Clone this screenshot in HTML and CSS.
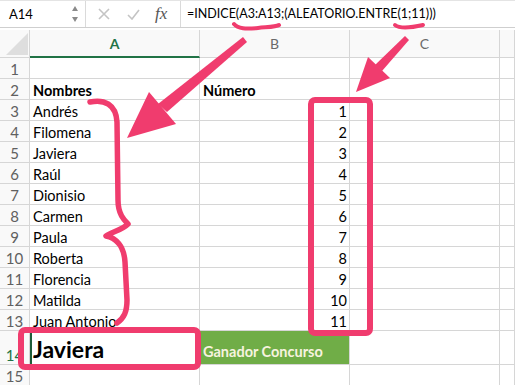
FILE: index.html
```html
<!DOCTYPE html>
<html lang="es">

<head>
    <meta charset="utf-8">
    <title>Ganador Concurso - Hoja</title>
    <link rel="stylesheet" href="styles.css">
</head>

<body>
    <div class="app">
        <div class="formula-bar">
            <div class="name-box">
                <span>A14</span>
                <span class="stepper"><i class="up"></i><i class="down"></i></span>
            </div>
            <div class="tools">
                <svg class="tool" width="12" height="12" viewBox="0 0 12 12"><path d="M1 1 L11 11 M11 1 L1 11" /></svg>
                <svg class="tool" width="13" height="11" viewBox="0 0 13 11"><path d="M1 6 L5 10 L12 1" /></svg>
                <span class="fx">fx</span>
            </div>
            <div class="formula">=INDICE(A3:A13;(ALEATORIO.ENTRE(1;11)))</div>
        </div>

        <div class="sheet">
            <div class="row head">
                <div class="corner"><i></i></div>
                <div class="col-h active">A</div>
                <div class="col-h">B</div>
                <div class="col-h">C</div>
                <div class="col-h"></div>
            </div>
            <div class="row"><div class="rh">1</div><div></div><div></div><div></div><div></div></div>
            <div class="row"><div class="rh">2</div><div class="bold">Nombres</div><div class="bold">Número</div><div></div><div></div></div>
            <div class="row"><div class="rh">3</div><div>Andrés</div><div class="num">1</div><div></div><div></div></div>
            <div class="row"><div class="rh">4</div><div>Filomena</div><div class="num">2</div><div></div><div></div></div>
            <div class="row"><div class="rh">5</div><div>Javiera</div><div class="num">3</div><div></div><div></div></div>
            <div class="row"><div class="rh">6</div><div>Raúl</div><div class="num">4</div><div></div><div></div></div>
            <div class="row"><div class="rh">7</div><div>Dionisio</div><div class="num">5</div><div></div><div></div></div>
            <div class="row"><div class="rh">8</div><div>Carmen</div><div class="num">6</div><div></div><div></div></div>
            <div class="row"><div class="rh">9</div><div>Paula</div><div class="num">7</div><div></div><div></div></div>
            <div class="row"><div class="rh">10</div><div>Roberta</div><div class="num">8</div><div></div><div></div></div>
            <div class="row"><div class="rh">11</div><div>Florencia</div><div class="num">9</div><div></div><div></div></div>
            <div class="row"><div class="rh">12</div><div>Matilda</div><div class="num">10</div><div></div><div></div></div>
            <div class="row"><div class="rh">13</div><div>Juan Antonio</div><div class="num">11</div><div></div><div></div></div>
            <div class="row tall"><div class="rh active">14</div><div class="winner">Javiera</div><div class="label">Ganador Concurso</div><div></div><div></div></div>
            <div class="row"><div class="rh">15</div><div></div><div></div><div></div><div></div></div>
        </div>

        <!-- pink annotations drawn over the sheet -->
        <svg class="marks" width="515" height="385" viewBox="0 0 515 385">
            <g fill="none" stroke="#f03c6e" stroke-linecap="round" stroke-linejoin="round">
                <path stroke-width="4" d="M234 24 C238 29 246 29 258 28 C268 27 276 27 279 25" />
                <path stroke-width="4" d="M395 25 C400 29 410 28 423 25" />
                <path stroke-width="5.5" d="M90 102 C104 99 116 104 117 122 L118 200 C118 214 124 220 128 224 C122 230 112 232 106 236 C116 238 124 246 125 262 L127 300 C127 312 124 318 117 323" />
                <rect x="311" y="100" width="59" height="233" rx="4" stroke-width="6" />
                <rect x="21" y="330" width="177" height="37" rx="4" stroke-width="6" />
            </g>
            <g fill="#f03c6e">
                <polygon points="243,37 247,42 167,112 158,104" />
                <polygon points="127,138 149,92 176,124" />
                <polygon points="405,36 409,40 382,71 375,65" />
                <polygon points="356,92 368,57 390,78" />
            </g>
        </svg>
    </div>
</body>

</html>
```

FILE: styles.css
```css
* { box-sizing: border-box; }
body { margin: 0; font-family: Lato, "Open Sans", sans-serif; color: #000; background: #fff; }
.app { position: relative; width: 515px; height: 385px; overflow: hidden; }

.formula-bar { display: flex; height: 28px; border-bottom: 1px solid #cfcfcf; border-top: 1px solid #e4e4e4; }
.name-box { width: 86px; display: flex; align-items: center; justify-content: space-between; padding: 0 7px 0 9px; border-right: 1px solid #dadada; font-size: 13px; }
.stepper { display: flex; flex-direction: column; gap: 6px; }
.stepper i { width: 0; height: 0; border-left: 3px solid transparent; border-right: 3px solid transparent; }
.stepper .up { border-bottom: 5px solid #8a8a8a; }
.stepper .down { border-top: 5px solid #8a8a8a; }
.tools { width: 95px; display: flex; align-items: center; gap: 17px; padding-left: 12px; border-right: 1px solid #dadada; }
.tool path { fill: none; stroke: #c4c4c4; stroke-width: 1.6; }
.fx { font-family: "Liberation Serif", serif; font-style: italic; font-size: 17px; color: #555; margin-left: -2px; }
.formula { padding-left: 6px; font-size: 12.5px; line-height: 26px; }

.sheet { margin-top: 2px; }
.row { display: grid; grid-template-columns: 30px 170px 150px 150px 15px; height: 21px; font-size: 14.5px; }
.row > div { border-right: 1px solid #d6d6d6; border-bottom: 1px solid #d6d6d6; display: flex; align-items: flex-end; padding: 0 3px; line-height: 17px; white-space: nowrap; }
.row.tall { height: 34px; }

.head { height: 28px; background: #f9f9f9; }
.head > div { align-items: center; justify-content: center; font-size: 14px; color: #6a6a6a; }
.corner { position: relative; }
.corner i { position: absolute; right: 1px; bottom: 2px; width: 0; height: 0; border-left: 22px solid transparent; border-bottom: 22px solid #dedede; }
.col-h.active { color: #217346; font-weight: bold; border-bottom: 2px solid #217346; }

.row > .rh { justify-content: center; padding: 0; font-size: 15px; color: #606060; background: #f9f9f9; }
.row > .rh.active { color: #217346; }

.bold { font-weight: bold; }
.row > .num { justify-content: flex-end; padding-right: 2px; }
.row > .winner { font-size: 23px; font-weight: bold; line-height: 28px; padding-bottom: 1px; box-shadow: inset 2px 0 0 #1d5e3a; }
.row > .label { background: #70ad47; color: #f6f3df; font-weight: bold; font-size: 14.5px; padding-bottom: 4px; }

.marks { position: absolute; top: 0; left: 0; pointer-events: none; }
```
